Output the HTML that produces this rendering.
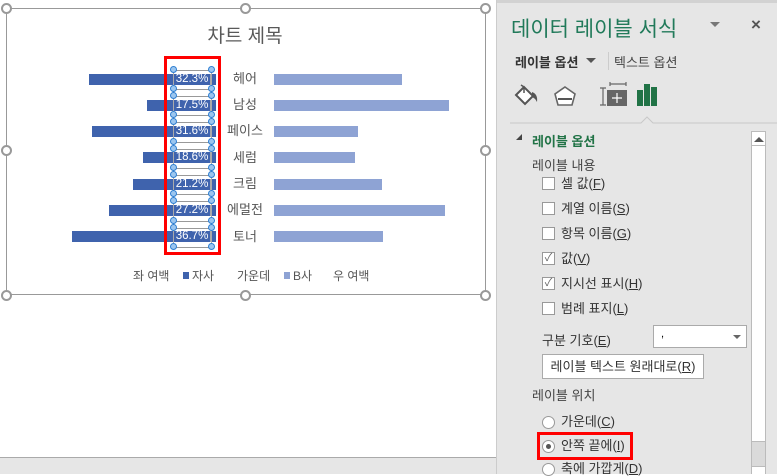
<!DOCTYPE html>
<html><head><meta charset="utf-8"><style>
*{margin:0;padding:0;box-sizing:border-box}
body{width:777px;height:474px;overflow:hidden;background:#fff;position:relative;font-family:"Liberation Sans","Noto Sans CJK KR",sans-serif;}
.a{position:absolute}
.lb{position:absolute;height:11px;background:#3f63ad}
.rb{position:absolute;height:11px;background:#8ea3d4;left:274px}
.pct{position:absolute;left:173px;width:38px;height:11px;color:#fff;font-size:11.5px;line-height:11px;text-align:center;border-left:1px solid #aaa;border-right:1px solid #aaa}
.cat{position:absolute;left:215px;width:60px;text-align:center;font-size:13px;color:#555;line-height:14px}
.h{position:absolute;width:7px;height:7px;border-radius:50%;background:#9cc6ef;border:1px solid #2f7fd2}
.hl{position:absolute;left:176px;width:34px;height:1px;background:#999}
.ph{position:absolute;width:11px;height:11px;border-radius:50%;background:#fff;border:2px solid #999}
.p{font-size:13px;color:#333}
.cb{position:absolute;left:542px;width:13px;height:13px;background:#fff;border:1px solid #999}
.ck{position:absolute;left:561px;font-size:13px;color:#333;line-height:14px}
.rd{position:absolute;left:542px;width:13px;height:13px;border-radius:50%;background:#fff;border:1px solid #999}
</style></head><body>
<div class="a" style="left:0;top:457px;width:497px;height:17px;background:#e6e6e6;border-top:1px solid #aaa"></div>
<div class="a" style="left:496px;top:0;width:1px;height:474px;background:#ccc"></div>
<div class="a" style="left:6px;top:8px;width:480px;height:287px;border:1px solid #999"></div>
<div class="ph" style="left:1px;top:3px"></div><div class="ph" style="left:240px;top:3px"></div><div class="ph" style="left:480px;top:3px"></div>
<div class="ph" style="left:1px;top:145px"></div><div class="ph" style="left:480px;top:145px"></div>
<div class="ph" style="left:1px;top:290px"></div><div class="ph" style="left:240px;top:290px"></div><div class="ph" style="left:480px;top:290px"></div>
<div class="a" style="left:0;width:490px;top:21px;text-align:center;font-size:19px;color:#595959">차트 제목</div>

<div class="lb" style="left:89px;top:73.5px;width:127px"></div><div class="rb" style="top:73.5px;width:128px"></div>
<div class="lb" style="left:147px;top:99.8px;width:69px"></div><div class="rb" style="top:99.8px;width:175px"></div>
<div class="lb" style="left:92px;top:126.1px;width:124px"></div><div class="rb" style="top:126.1px;width:84px"></div>
<div class="lb" style="left:143px;top:152.4px;width:73px"></div><div class="rb" style="top:152.4px;width:81px"></div>
<div class="lb" style="left:133px;top:178.7px;width:83px"></div><div class="rb" style="top:178.7px;width:108px"></div>
<div class="lb" style="left:109px;top:205px;width:107px"></div><div class="rb" style="top:205px;width:171px"></div>
<div class="lb" style="left:72px;top:231.3px;width:144px"></div><div class="rb" style="top:231.3px;width:109px"></div>

<div class="pct" style="top:73.5px">32.3%</div><div class="cat" style="top:72px">헤어</div>
<div class="pct" style="top:99.8px">17.5%</div><div class="cat" style="top:98px">남성</div>
<div class="pct" style="top:126.1px">31.6%</div><div class="cat" style="top:124px">페이스</div>
<div class="pct" style="top:152.4px">18.6%</div><div class="cat" style="top:151px">세럼</div>
<div class="pct" style="top:178.7px">21.2%</div><div class="cat" style="top:177px">크림</div>
<div class="pct" style="top:205px">27.2%</div><div class="cat" style="top:203px">에멀전</div>
<div class="pct" style="top:231.3px">36.7%</div><div class="cat" style="top:230px">토너</div>

<div class="hl" style="top:70px"></div><div class="hl" style="top:89px"></div><div class="hl" style="top:96px"></div><div class="hl" style="top:115px"></div><div class="hl" style="top:122px"></div><div class="hl" style="top:142px"></div><div class="hl" style="top:149px"></div><div class="hl" style="top:168px"></div><div class="hl" style="top:175px"></div><div class="hl" style="top:194px"></div><div class="hl" style="top:201px"></div><div class="hl" style="top:221px"></div><div class="hl" style="top:228px"></div><div class="hl" style="top:247px"></div>
<div class="a" style="left:173px;top:70px;width:1px;height:177px;background:#aaa"></div>
<div class="a" style="left:211px;top:70px;width:1px;height:177px;background:#aaa"></div>
<div class="h" style="left:170px;top:66px"></div><div class="h" style="left:208px;top:66px"></div>
<div class="h" style="left:170px;top:85px"></div><div class="h" style="left:208px;top:85px"></div>
<div class="h" style="left:170px;top:92px"></div><div class="h" style="left:208px;top:92px"></div>
<div class="h" style="left:170px;top:111px"></div><div class="h" style="left:208px;top:111px"></div>
<div class="h" style="left:170px;top:118px"></div><div class="h" style="left:208px;top:118px"></div>
<div class="h" style="left:170px;top:138px"></div><div class="h" style="left:208px;top:138px"></div>
<div class="h" style="left:170px;top:145px"></div><div class="h" style="left:208px;top:145px"></div>
<div class="h" style="left:170px;top:164px"></div><div class="h" style="left:208px;top:164px"></div>
<div class="h" style="left:170px;top:171px"></div><div class="h" style="left:208px;top:171px"></div>
<div class="h" style="left:170px;top:190px"></div><div class="h" style="left:208px;top:190px"></div>
<div class="h" style="left:170px;top:197px"></div><div class="h" style="left:208px;top:197px"></div>
<div class="h" style="left:170px;top:217px"></div><div class="h" style="left:208px;top:217px"></div>
<div class="h" style="left:170px;top:224px"></div><div class="h" style="left:208px;top:224px"></div>
<div class="h" style="left:170px;top:243px"></div><div class="h" style="left:208px;top:243px"></div>
<div class="a" style="left:164px;top:56px;width:57px;height:199px;border:3px solid #f00"></div>

<div class="a" style="left:133px;top:267px;font-size:12px;color:#555">좌 여백</div>
<div class="a" style="left:183px;top:272px;width:6px;height:7px;background:#3f63ad"></div>
<div class="a" style="left:192px;top:267px;font-size:12px;color:#555">자사</div>
<div class="a" style="left:237px;top:267px;font-size:12px;color:#555">가운데</div>
<div class="a" style="left:284px;top:272px;width:6px;height:7px;background:#8ea3d4"></div>
<div class="a" style="left:293px;top:267px;font-size:12px;color:#555">B사</div>
<div class="a" style="left:333px;top:267px;font-size:12px;color:#555">우 여백</div>

<div class="a" style="left:497px;top:0;width:280px;height:474px;background:#e6e6e6;border-top:3px solid #d2d2d2"></div>
<div class="a" style="left:511px;top:13px;font-size:21px;color:#217a5a">데이터 레이블 서식</div>
<div class="a" style="left:710px;top:22px;width:0;height:0;border-left:5px solid transparent;border-right:5px solid transparent;border-top:5px solid #777"></div>
<div class="a" style="left:751px;top:15px;font-size:17px;color:#555;font-weight:bold">×</div>
<div class="a" style="left:515px;top:52px;font-size:13px;font-weight:bold;color:#333">레이블 옵션</div>
<div class="a" style="left:586px;top:58px;border-left:5px solid transparent;border-right:5px solid transparent;border-top:5px solid #555"></div>
<div class="a" style="left:608px;top:52px;width:1px;height:18px;background:#ccc"></div>
<div class="a" style="left:614px;top:52px;font-size:13px;color:#444">텍스트 옵션</div>
<svg class="a" style="left:512px;top:82px" width="160" height="26">
<path d="M4 13 L12 5 L21 14 L13 22 Z" fill="#fff" stroke="#555" stroke-width="2"/><path d="M9 3 L12 5 L12 11" fill="none" stroke="#555" stroke-width="1.5"/><path d="M20 10 Q26 12 25 20 Q23 16 20 15Z" fill="#555"/>
<path d="M53 5 L63 12 L60 23 L46 23 L43 12 Z" fill="#fff" stroke="#666" stroke-width="1.6"/><path d="M46 17 L60 17" stroke="#555" stroke-width="2"/>
<path d="M91 6 L91 23 M88 6 L94 6 M88 23 L94 23 M98 2 L114 2 M98 0 L98 4 M114 0 L114 4" stroke="#666" stroke-width="1.2" fill="none"/><rect x="95" y="8" width="20" height="16" fill="#666"/><path d="M105 11 L105 21 M100 16 L110 16" stroke="#fff" stroke-width="1.2"/>
<rect x="125" y="8" width="6" height="16" fill="#217346"/><rect x="132" y="2" width="6" height="22" fill="#217346"/><rect x="139" y="5" width="6" height="19" fill="#217346"/>
</svg>
<svg class="a" style="left:510px;top:115px" width="267" height="10"><path d="M0 8 L131 8 L137 2 L143 8 L267 8" fill="none" stroke="#c8c8c8"/></svg>
<div class="a" style="left:516px;top:134px;border-left:6px solid transparent;border-bottom:6px solid #444;"></div>
<div class="a" style="left:532px;top:131px;font-size:13px;font-weight:bold;color:#217346">레이블 옵션</div>
<div class="a" style="left:751px;top:131px;width:15px;height:343px;background:#dadada;border:1px solid #bbb"></div>
<div class="a" style="left:752px;top:132px;width:13px;height:14px;background:#fff;border-bottom:1px solid #bbb"></div>
<div class="a" style="left:754px;top:137px;border-left:5px solid transparent;border-right:5px solid transparent;border-bottom:5px solid #555"></div>
<div class="a" style="left:752px;top:146px;width:13px;height:296px;background:#fff;border-bottom:1px solid #bbb"></div>
<div class="a" style="left:752px;top:466px;width:13px;height:8px;background:#fff;border-top:1px solid #bbb"></div>

<div class="a p" style="left:532px;top:155px;color:#444">레이블 내용</div>
<div class="cb" style="top:177px"></div><div class="ck" style="top:177px">셀 값(<u>F</u>)</div>
<div class="cb" style="top:202px"></div><div class="ck" style="top:202px">계열 이름(<u>S</u>)</div>
<div class="cb" style="top:227px"></div><div class="ck" style="top:227px">항목 이름(<u>G</u>)</div>
<div class="cb" style="top:252px;font-size:11px;color:#666;line-height:11px;text-align:center">✓</div><div class="ck" style="top:252px">값(<u>V</u>)</div>
<div class="cb" style="top:277px;font-size:11px;color:#666;line-height:11px;text-align:center">✓</div><div class="ck" style="top:277px">지시선 표시(<u>H</u>)</div>
<div class="cb" style="top:302px"></div><div class="ck" style="top:302px">범례 표지(<u>L</u>)</div>
<div class="a p" style="left:542px;top:330px">구분 기호(<u>E</u>)</div>
<div class="a" style="left:653px;top:325px;width:94px;height:23px;background:#fff;border:1px solid #aaa;font-size:11px;padding:2px 7px">,</div>
<div class="a" style="left:733px;top:335px;border-left:4px solid transparent;border-right:4px solid transparent;border-top:4px solid #666"></div>
<div class="a" style="left:542px;top:354px;width:162px;height:25px;background:#fff;border:1px solid #aaa;font-size:13px;color:#333;text-align:center;line-height:23px">레이블 텍스트 원래대로(<u>R</u>)</div>
<div class="a p" style="left:532px;top:385px;color:#444">레이블 위치</div>
<div class="rd" style="top:416px"></div><div class="ck" style="top:415px">가운데(<u>C</u>)</div>
<div class="rd" style="top:440px"></div><div class="a" style="left:546px;top:444px;width:5px;height:5px;border-radius:50%;background:#555"></div><div class="ck" style="top:439px">안쪽 끝에(<u>I</u>)</div>
<div class="a" style="left:537px;top:432px;width:96px;height:28px;border:3px solid #f00"></div>
<div class="rd" style="top:463px"></div><div class="ck" style="top:462px">축에 가깝게(<u>D</u>)</div>
</body></html>
